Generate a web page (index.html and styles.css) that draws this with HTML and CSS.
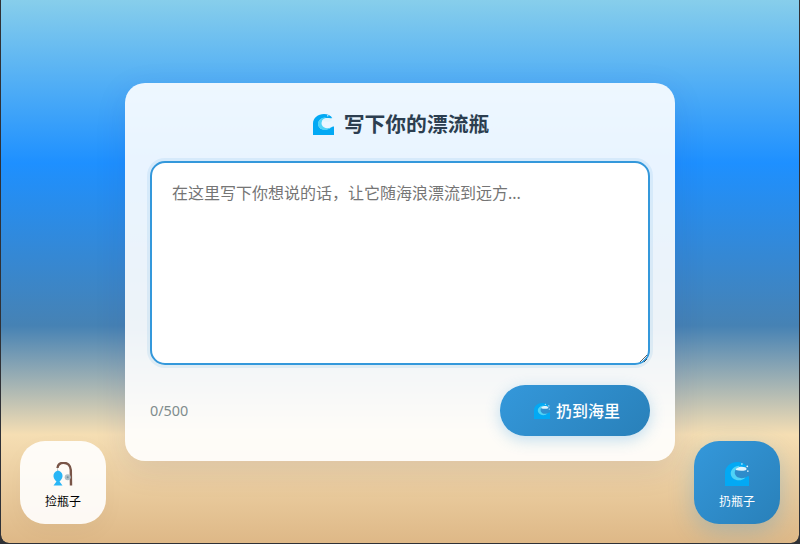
FILE: index.html
```html
<!DOCTYPE html>
<html lang="zh-CN">
<head>
<meta charset="utf-8">
<title>漂流瓶</title>
<link rel="stylesheet" href="styles.css">
</head>
<body>
<div class="scene">
  <main class="card">
    <h1 class="title">
      <svg class="wave-title" viewBox="0 0 21 21"><use href="#wave"/></svg>
      <span class="title-text">写下你的漂流瓶</span>
    </h1>
    <textarea class="message" placeholder="在这里写下你想说的话，让它随海浪漂流到远方..."></textarea>
    <div class="actions">
      <span class="count">0/500</span>
      <button class="send">
        <svg class="wave-send" viewBox="0 0 21 21"><use href="#wave"/></svg>
        <span class="send-text">扔到海里</span>
      </button>
    </div>
  </main>
  <div class="dock">
    <button class="side side-pick">
      <svg class="side-icon" viewBox="0 0 24 24">
        <path d="M6.500 4 V10" fill="none" stroke="#90a4ae" stroke-width="0.5"/>
        <path d="M6.500 6 C6.500 3 9 0.800 12.500 0.800 C16.500 0.800 19.500 3.500 19.800 8 L20 23.500" fill="none" stroke="#795548" stroke-width="2.400"/>
        <path d="M7 8.500 C10.500 9.500 11.800 12 11.500 14.500 C11.200 17 9.500 18.500 8.500 19.500 L11.500 23.500 H2.500 L5.500 19.500 C4.500 18.500 2.800 17 2.500 14.500 C2.200 12 3.500 9.500 7 8.500 Z" fill="#29b6f6"/>
        <circle cx="16.700" cy="15.200" r="3" fill="#b0bec5"/>
        <circle cx="16.700" cy="15.200" r="1" fill="#78909c"/>
      </svg>
      <span>捡瓶子</span>
    </button>
    <button class="side side-throw">
      <svg class="side-icon" viewBox="0 0 21 21"><use href="#wave"/></svg>
      <span>扔瓶子</span>
    </button>
  </div>
</div>
<svg class="defs" width="0" height="0">
  <symbol id="wave" viewBox="0 0 21 21">
    <path d="M0 21 V9.500 C0 4 5 0 11 0 C14.500 0 17.500 1.500 19.500 4 L15 5 C12 3 7 4 5.500 8 C4.500 12 7 15.500 11 15.500 C14 15.500 16 15 18 13.500 C19 12.700 20.300 12.300 21 12.500 V21 Z" fill="#03a9f4"/>
    <path d="M12.500 3.200 C8 3.500 5 6.500 5 10 C5 13.500 8.500 16 12 16 C14.500 16 16.500 15 18 13.500 C14 15 10 14 8.800 10.800 C8 8 9.500 5.200 12.500 4.500 Z" fill="#4fd3f7"/>
    <path d="M9.500 6 C12 3.800 15 3.800 17.500 4.500 C19 5 19.500 6.500 18 7.200 C15.500 8 12 7.800 9.500 7 Z" fill="#e1f5fe"/>
    <circle cx="19.500" cy="3.800" r="0.800" fill="#e1f5fe"/>
    <circle cx="20" cy="8" r="0.700" fill="#e1f5fe"/>
    <circle cx="14.800" cy="1.800" r="0.700" fill="#e1f5fe"/>
  </symbol>
</svg>
</body>
</html>
```
FILE: styles.css
```css
* { box-sizing: border-box; }
html, body { margin: 0; height: 100%; }
body {
  background: #2f3136;
  font-family: "Noto Sans", "Noto Sans CJK SC", sans-serif;
}
.defs { display: none; }
.scene {
  width: 800px;
  height: 544px;
  position: relative;
  display: flex;
  align-items: center;
  justify-content: center;
  padding-top: 1px;
  border: 1px solid #2f3136;
  border-top: 0;
  border-radius: 0 0 9px 9px;
  background: linear-gradient(180deg, #87ceeb 0%, #1e90ff 30%, #4682b4 60%, #f5deb3 80%, #deb887 100%) padding-box;
}
.card {
  width: 550px;
  height: 378px;
  padding: 25px;
  border-radius: 20px;
  background: rgba(255, 255, 255, 0.9);
  box-shadow: 0 8px 32px rgba(31, 38, 135, 0.1);
}
.title {
  margin: 0 0 20px;
  padding-left: 2px;
  display: flex;
  align-items: center;
  justify-content: center;
  gap: 10px;
  height: 33px;
  font-size: 20.8px;
  font-weight: 700;
  color: #2c3e50;
}
.title-text { margin-bottom: 4px; }
.wave-title { width: 21px; height: 21px; }
.message {
  display: block;
  width: 100%;
  height: 204px;
  padding: 20px;
  border: 2px solid #3498db;
  border-radius: 15px;
  outline: none;
  background: #fff;
  box-shadow: 0 0 0 3px rgba(52, 152, 219, 0.1);
  font: 16px/20px "Noto Sans", "Noto Sans CJK SC", sans-serif;
  color: #2c3e50;
}
.message::placeholder { color: #757575; }
.actions {
  display: flex;
  align-items: center;
  justify-content: space-between;
  margin-top: 20px;
}
.count { font-size: 14.4px; color: #7f8c8d; }
.send {
  width: 150px;
  height: 51px;
  padding: 0 0 0 4px;
  display: flex;
  align-items: center;
  justify-content: center;
  gap: 6px;
  border: 0;
  border-radius: 25px;
  background: linear-gradient(135deg, #3498db, #2980b9);
  box-shadow: 0 4px 15px rgba(52, 152, 219, 0.3);
  color: #fff;
  font: 500 16px "Noto Sans", "Noto Sans CJK SC", sans-serif;
}
.send-text { margin-bottom: 2px; }
.wave-send { width: 16px; height: 16px; }
.dock {
  position: absolute;
  left: 19px;
  right: 19px;
  bottom: 19px;
  display: flex;
  justify-content: space-between;
}
.side {
  width: 86px;
  height: 83px;
  padding: 7px 0 0;
  display: flex;
  flex-direction: column;
  align-items: center;
  justify-content: center;
  gap: 7px;
  border: 0;
  border-radius: 25px;
  font: 12px/17px "Noto Sans", "Noto Sans CJK SC", sans-serif;
}
.side-icon { width: 24px; height: 24px; }
.side-pick {
  background: rgba(255, 255, 255, 0.9);
  box-shadow: 0 8px 25px rgba(0, 0, 0, 0.03);
  color: #000;
}
.side-throw {
  background: linear-gradient(135deg, #3498db, #2980b9);
  box-shadow: 0 8px 25px rgba(52, 152, 219, 0.3);
  color: #fff;
}
```
